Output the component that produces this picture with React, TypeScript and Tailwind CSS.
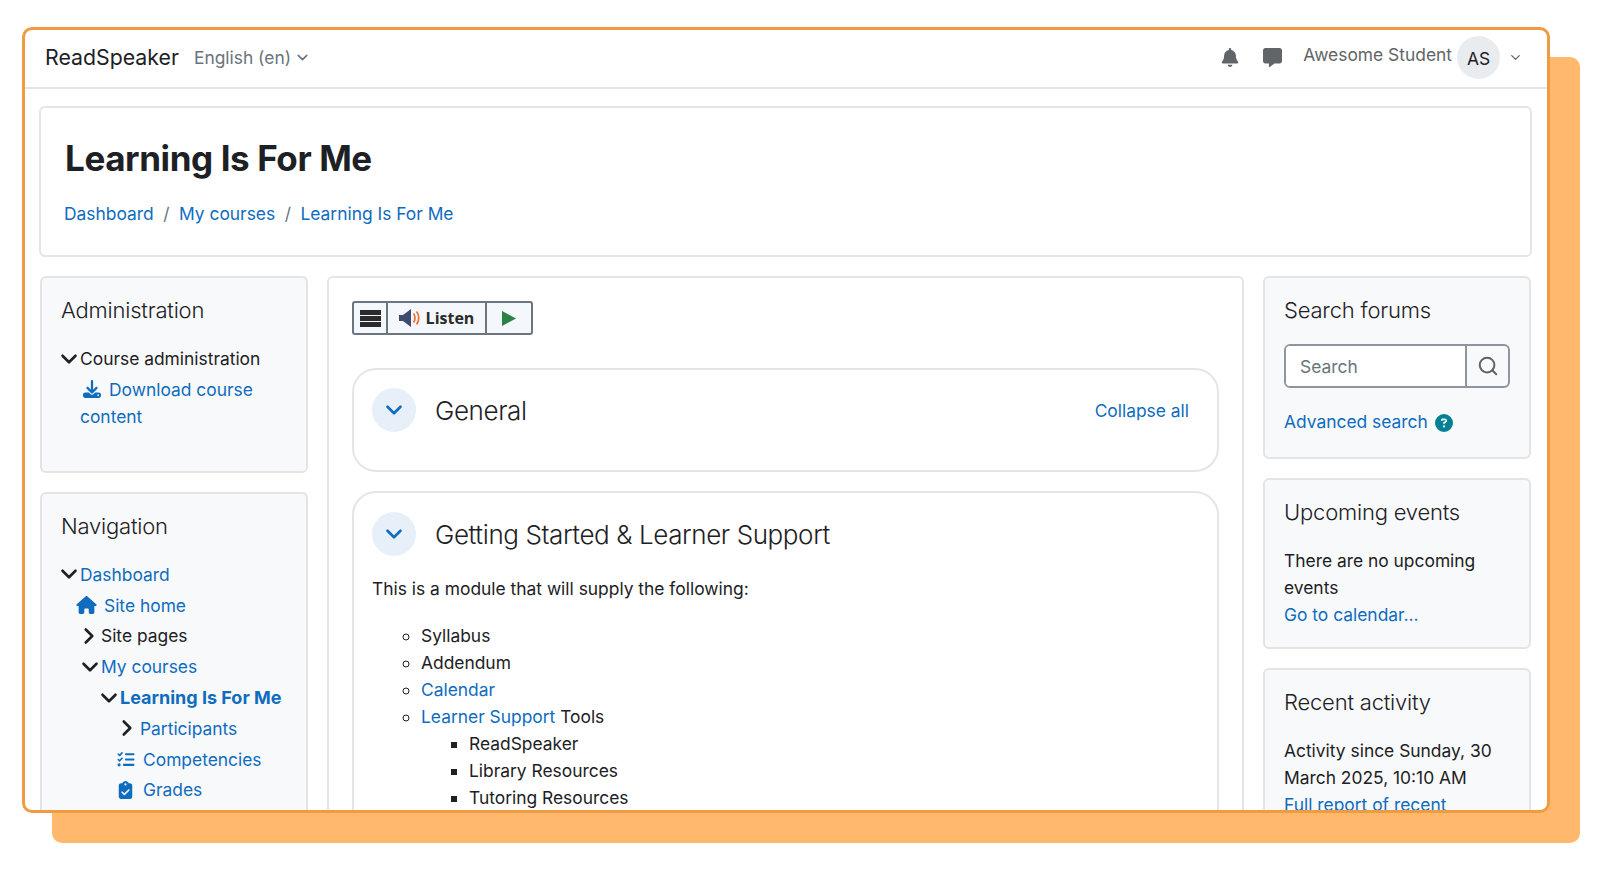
import React from "react";
import { FaBell, FaMessage, FaDownload, FaHouse, FaListCheck, FaClipboardCheck, FaCircleQuestion } from "react-icons/fa6";
import { ChevronDown, ChevronRight, Search } from "lucide-react";

const link = "text-[#0f6cbf]";

function Card({ title, className, titleClass, children }: { title: string; className?: string; titleClass?: string; children: React.ReactNode }) {
  return (
    <div className={`rounded-[6px] border-2 border-[#e2e4e7] bg-[#f8f9fa] px-[19px] pt-[18px] ${className ?? ""}`}>
      <h5 className={`text-[22px] leading-[28px] font-light tracking-[-0.2px] text-[#1d2125] ${titleClass ?? "mb-[21px]"}`}>{title}</h5>
      {children}
    </div>
  );
}

function NavRow({ indent, icon, children }: { indent: string; icon: React.ReactNode; children: React.ReactNode }) {
  return (
    <div className={`flex h-[30.8px] items-center ${indent}`}>
      <span className="flex w-[19px] shrink-0 items-center">{icon}</span>
      {children}
    </div>
  );
}

const Down = () => <ChevronDown className="-ml-[5px] h-[26px] w-[26px] shrink-0 text-[#1d2125]" strokeWidth={2.4} />;
const Right = () => <ChevronRight className="-ml-[6px] h-[26px] w-[26px] shrink-0 text-[#1d2125]" strokeWidth={2.4} />;

function Section({ title, className, action, children }: { title: string; className?: string; action?: React.ReactNode; children?: React.ReactNode }) {
  return (
    <div className={`rounded-[24px] border-2 border-[#e2e6ea] pr-[19px] pl-[18px] ${className ?? ""}`}>
      <div className="flex items-center">
        <span className="flex h-[44px] w-[44px] shrink-0 items-center justify-center rounded-full bg-[#e7eff8]">
          <ChevronDown className="h-[26px] w-[26px] text-[#0f6cbf]" strokeWidth={2.4} />
        </span>
        <h3 className="ml-[19px] pt-[2px] text-[26px] leading-[44px] font-light tracking-[-0.4px] text-[#1d2125]">{title}</h3>
        {action}
      </div>
      {children}
    </div>
  );
}

export default function App() {
  return (
    <div className="h-[870px] w-[1600px] overflow-hidden bg-white pt-[27px] pl-[22px] font-['Inter',sans-serif] text-[17.4px] leading-[27px] text-[#1d2125]">
      <div className="h-[786px] w-[1528px] rounded-[10px] border-[3px] border-[#f09b41] bg-white shadow-[30px_30px_0_#ffb86c]">
        <div className="h-full w-full overflow-hidden rounded-[7px]">
          <header className="flex h-[59px] items-center border-b-2 border-[#e4e5e7] pr-[24px] pb-[2px] pl-[20px]">
            <span className="text-[21.3px] text-[#1d2125]">ReadSpeaker</span>
            <span className="ml-[15px] flex items-center text-[#6a737b]">
              English (en)
              <ChevronDown className="ml-[3px] h-[17px] w-[17px]" strokeWidth={2.2} />
            </span>
            <div className="ml-auto flex items-center text-[#626568]">
              <FaBell className="h-[19px] w-[18px]" />
              <FaMessage className="ml-[24px] h-[19px] w-[19px]" />
              <span className="relative -top-[3px] ml-[21px]">Awesome Student</span>
              <span className="ml-[5px] flex h-[43px] w-[43px] items-center justify-center rounded-full bg-[#e9ecef] pt-[2px] text-[#1d2125]">AS</span>
              <ChevronDown className="ml-[8px] h-[15px] w-[15px]" />
            </div>
          </header>

          <div className="pt-[17px] pr-[15px] pl-[14px]">
            <div className="h-[151px] rounded-[6px] border-2 border-[#e4e5e7] px-[23px] pt-[27px]">
              <h1 className="ml-[1px] text-[35px] leading-[46px] font-bold tracking-[-0.4px] text-[#1d2125]">Learning Is For Me</h1>
              <div className="mt-[19px] flex items-center">
                <span className={link}>Dashboard</span>
                <span className="mx-[9.5px] text-[#6a737b]">/</span>
                <span className={link}>My courses</span>
                <span className="mx-[9.5px] text-[#6a737b]">/</span>
                <span className={link}>Learning Is For Me</span>
              </div>
            </div>

            <div className="mt-[19px] flex items-start pl-[1px]">
              <aside className="flex w-[268px] shrink-0 flex-col gap-[19px]">
                <Card title="Administration" className="h-[197px]">
                  <div className="flex h-[27px] items-center">
                    <span className="flex w-[19px] shrink-0 items-center"><Down /></span>
                    Course administration
                  </div>
                  <div className={`mt-[4px] pl-[19px] ${link}`}>
                    <FaDownload className="mr-[8px] ml-[3px] inline h-[18px] w-[18px] align-[-2px]" />
                    Download course content
                  </div>
                </Card>
                <Card title="Navigation" titleClass="mb-[19px]" className="h-[400px]">
                  <NavRow indent="" icon={<Down />}><span className={link}>Dashboard</span></NavRow>
                  <NavRow indent="pl-[15px]" icon={<FaHouse className={`h-[18px] w-[21px] shrink-0 ${link}`} />}><span className={`ml-[9px] ${link}`}>Site home</span></NavRow>
                  <NavRow indent="pl-[21px]" icon={<Right />}><span>Site pages</span></NavRow>
                  <NavRow indent="pl-[21px]" icon={<Down />}><span className={link}>My courses</span></NavRow>
                  <NavRow indent="pl-[40px]" icon={<Down />}><span className={`text-[18px] font-bold ${link}`}>Learning Is For Me</span></NavRow>
                  <NavRow indent="pl-[59px]" icon={<Right />}><span className={`ml-[1px] ${link}`}>Participants</span></NavRow>
                  <NavRow indent="pl-[55px]" icon={<FaListCheck className={`h-[17px] w-[20px] shrink-0 ${link}`} />}><span className={`ml-[8px] ${link}`}>Competencies</span></NavRow>
                  <NavRow indent="pl-[57px]" icon={<FaClipboardCheck className={`h-[18px] w-[15px] shrink-0 ${link}`} />}><span className={`ml-[6px] ${link}`}>Grades</span></NavRow>
                </Card>
              </aside>

              <main className="ml-[19px] h-[600px] w-[917px] shrink-0 rounded-t-[6px] border-2 border-[#e4e5e7] px-[23px] pt-[23px]">
                <div className="flex h-[34px] w-[181px] items-stretch rounded-[3px] border-2 border-[#6b7681] bg-[#f4f8fc] font-['Open_Sans',sans-serif] text-[16px] leading-[30px] font-bold text-[#2b2b2b]">
                  <span className="flex w-[34px] items-center justify-center border-r-2 border-[#6b7681]">
                    <svg width="21" height="17" viewBox="0 0 21 17" fill="#2b2b2b"><rect width="21" height="5" /><rect y="6" width="21" height="5" /><rect y="12" width="21" height="5" /></svg>
                  </span>
                  <span className="flex w-[99px] items-center justify-center gap-[5px] border-r-2 border-[#6b7681]">
                    <svg width="22" height="18" viewBox="0 0 22 18">
                      <path d="M0 6h4L12 0v18L4 12H0z" fill="#3f4a6e" />
                      <path d="M14.500 4.500c2 2.500 2 6.500 0 9M17.500 2.500c3 3.500 3 9.500 0 13" fill="none" stroke="#f0703a" strokeWidth="1.800" />
                    </svg>
                    Listen
                  </span>
                  <span className="flex flex-1 items-center justify-center">
                    <svg width="14" height="15" viewBox="0 0 14 15"><path d="M0 0l14 7.500L0 15z" fill="#2a8245" /></svg>
                  </span>
                </div>

                <Section
                  title="General"
                  className="mt-[33px] h-[104px] pt-[17px]"
                  action={<span className={`mr-[9px] ml-auto ${link}`}>Collapse all</span>}
                />
                <Section title="Getting Started & Learner Support" className="mt-[19px] h-[400px] pt-[18px]">
                  <p className="mt-[18px]">This is a module that will supply the following:</p>
                  <ul className="mt-[20px] list-[circle] pl-[49px] marker:text-[#1d2125]">
                    <li>Syllabus</li>
                    <li>Addendum</li>
                    <li className={link}>Calendar</li>
                    <li><span className={link}>Learner Support</span> Tools
                      <ul className="list-[square] pl-[48px]">
                        <li>ReadSpeaker</li>
                        <li>Library Resources</li>
                        <li>Tutoring Resources</li>
                      </ul>
                    </li>
                  </ul>
                </Section>
              </main>

              <aside className="ml-[19px] flex w-[268px] shrink-0 flex-col gap-[19px]">
                <Card title="Search forums" titleClass="mb-[20px]" className="h-[183px]">
                  <div className="flex h-[44px] overflow-hidden rounded-[6px] border-2 border-[#8f959e]">
                    <span className="flex flex-1 items-center border-r-2 border-[#8f959e] bg-white pl-[14px] text-[#6a737b]">Search</span>
                    <span className="flex w-[41px] items-center justify-center text-[#5f6368]"><Search className="h-[22px] w-[22px]" strokeWidth={2.2} /></span>
                  </div>
                  <div className="mt-[20px] flex items-center">
                    <span className={link}>Advanced search</span>
                    <FaCircleQuestion className="mt-[2px] ml-[7px] h-[18px] w-[18px] text-[#008196]" />
                  </div>
                </Card>
                <Card title="Upcoming events" className="h-[171px]">
                  <p>There are no upcoming events</p>
                  <p className={link}>Go to calendar...</p>
                </Card>
                <Card title="Recent activity" className="h-[200px]">
                  <p>Activity since Sunday, 30 March 2025, 10:10 AM</p>
                  <p className={link}>Full report of recent activity...</p>
                </Card>
              </aside>
            </div>
          </div>
        </div>
      </div>
    </div>
  );
}
